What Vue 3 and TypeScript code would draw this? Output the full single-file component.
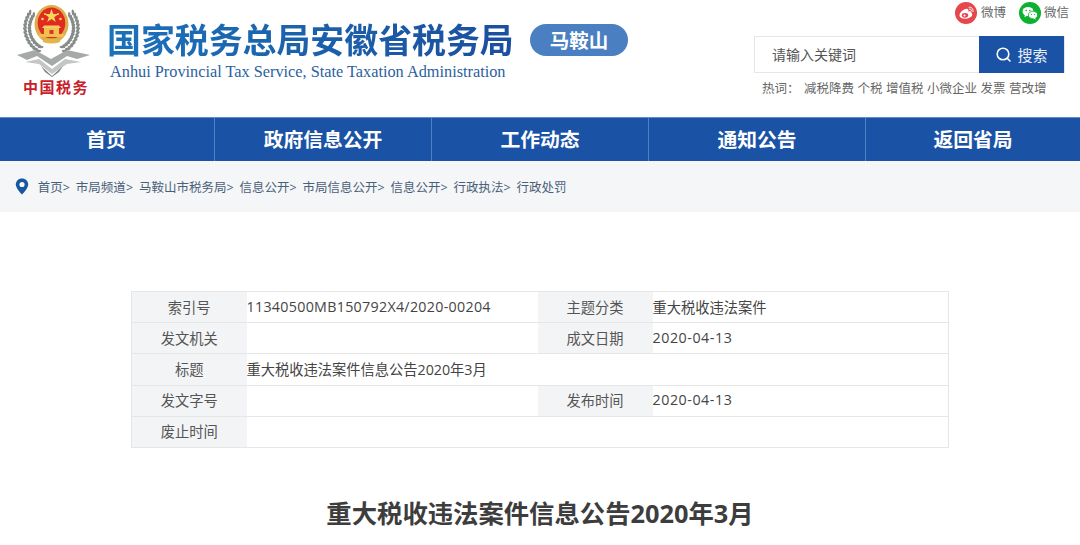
<script setup lang="ts">
const navItems = ['首页', '政府信息公开', '工作动态', '通知公告', '返回省局']
const crumbs = ['首页', '市局频道', '马鞍山市税务局', '信息公开', '市局信息公开', '信息公开', '行政执法', '行政处罚']
const hotWords = ['减税降费', '个税', '增值税', '小微企业', '发票', '营改增']

// wreath leaves around the emblem, angle in degrees on the ring
const leaves: { x: number; y: number; r: number }[] = []
for (let a = 120; a <= 222; a += 8) {
  const rad = (a * Math.PI) / 180
  for (const radius of [22, 26.5]) {
    const dx = Math.cos(rad) * radius
    const dy = Math.sin(rad) * radius
    leaves.push({ x: 36.5 + dx, y: 28 + dy, r: a + 60 })
    leaves.push({ x: 36.5 - dx, y: 28 + dy, r: -a - 60 })
  }
}
</script>

<template>
  <div class="page">
    <header class="header">
      <div class="logo">
        <svg width="80" height="100" viewBox="0 0 80 100">
          <!-- wreath -->
          <g fill="#858c87">
            <ellipse
              v-for="(leaf, i) in leaves"
              :key="i"
              :cx="leaf.x"
              :cy="leaf.y"
              rx="3"
              ry="1.300"
              :transform="`rotate(${leaf.r} ${leaf.x} ${leaf.y})`"
            />
          </g>
          <!-- ribbons -->
          <path d="M2 55 L20 50 L36 59 L52 50 L75 55 L62 59 L52 56 L37 66 L22 56 L12 60 Z" fill="#a5aaa8" />
          <path d="M10 62 L24 59 L37 69 L50 59 L66 62 L52 64 L37 74 L24 64 Z" fill="#c3c6c4" />
          <path d="M26 66 L37 76 L48 66 L44 72 L37 77 L30 72 Z" fill="#7e8482" />
          <!-- emblem -->
          <ellipse cx="36.500" cy="24" rx="17" ry="19" fill="#dcae4e" />
          <ellipse cx="36.500" cy="23" rx="13.800" ry="15.500" fill="#e02b20" />
          <polygon points="36.500,9 38.200,14 43.500,14 39.200,17.200 40.800,22 36.500,19 32.200,22 33.800,17.200 29.500,14 34.800,14" fill="#f6d75a" />
          <circle cx="27.500" cy="19" r="1.300" fill="#f6d75a" />
          <circle cx="45.500" cy="19" r="1.300" fill="#f6d75a" />
          <circle cx="30" cy="14" r="1" fill="#f6d75a" />
          <circle cx="43" cy="14" r="1" fill="#f6d75a" />
          <path d="M27 28 H46 L44 25.500 H29 Z" fill="#f2cd63" />
          <rect x="29" y="28" width="15" height="6" fill="#f2c14e" />
          <rect x="34.500" y="30" width="4" height="4" fill="#d3392a" />
          <rect x="24" y="34" width="25" height="3" rx="1" fill="#eec04c" />
          <ellipse cx="36.500" cy="41" rx="9" ry="2.500" fill="#e4b64a" />
          <text x="8" y="93" class="logo-text">中国税务</text>
        </svg>
      </div>

      <div class="brand">
        <div class="brand-cn">国家税务总局安徽省税务局</div>
        <div class="brand-en">Anhui Provincial Tax Service, State Taxation Administration</div>
      </div>
      <div class="city">马鞍山</div>

      <div class="tools">
        <div class="social">
          <span class="social-item weibo">
            <svg width="22" height="22" viewBox="0 0 22 22">
              <circle cx="11" cy="11" r="11" fill="#e5474c" />
              <path d="M4.500 13.500 C4.500 10.500 8.500 7 11.500 6.800 C13.500 6.700 13.800 8.300 13.300 9.500 C15.300 8.800 16.800 9.500 16.500 11.300 C18 11.800 17.800 16 11 16.800 C7 17.100 4.500 15.500 4.500 13.500 Z" fill="#fff" />
              <ellipse cx="10" cy="13.300" rx="3.200" ry="2.400" fill="#e5474c" />
              <circle cx="9.500" cy="13.500" r="1" fill="#fff" />
              <path d="M14 5.200 C16.500 4.800 18.500 6.800 18 9.500 M14.500 7 C15.700 6.800 16.600 7.800 16.300 9" fill="none" stroke="#fff" stroke-width="1" stroke-linecap="round" />
            </svg>
            <span class="social-text">微博</span>
          </span>
          <span class="social-item">
            <svg width="22" height="22" viewBox="0 0 22 22">
              <circle cx="11" cy="11" r="11" fill="#0bb12f" />
              <ellipse cx="9" cy="9.500" rx="5.500" ry="4.500" fill="#fff" />
              <path d="M6 12.500 L5.500 15.200 L8.500 13.500 Z" fill="#fff" />
              <ellipse cx="14" cy="13" rx="4.600" ry="3.800" fill="#fff" stroke="#0bb12f" stroke-width="0.800" />
              <path d="M16 15.800 L17 17.600 L14 16.400 Z" fill="#fff" />
              <circle cx="7.200" cy="8.500" r="0.800" fill="#0bb12f" />
              <circle cx="10.800" cy="8.500" r="0.800" fill="#0bb12f" />
              <circle cx="12.500" cy="12.500" r="0.600" fill="#0bb12f" />
              <circle cx="15.500" cy="12.500" r="0.600" fill="#0bb12f" />
            </svg>
            <span class="social-text">微信</span>
          </span>
        </div>
        <div class="search">
          <div class="search-input">请输入关键词</div>
          <button type="button" class="search-btn">
            <svg width="17" height="17" viewBox="0 0 17 17" fill="none" stroke="#fff" stroke-width="1.600">
              <circle cx="8" cy="8" r="5.800" />
              <path d="M12.200 12.200 L15 15" stroke-linecap="round" />
            </svg>
            <span>搜索</span>
          </button>
        </div>
        <div class="hot">
          <span class="hot-label">热词：</span>
          <span v-for="word in hotWords" :key="word">{{ word }}</span>
        </div>
      </div>
    </header>

    <nav class="nav">
      <a v-for="item in navItems" :key="item" class="nav-item">{{ item }}</a>
    </nav>

    <div class="crumbs">
      <svg class="pin" width="14" height="17" viewBox="0 0 14 17">
        <path d="M7 0.500 C3.300 0.500 0.800 3.200 0.800 6.500 C0.800 10.500 7 16.500 7 16.500 C7 16.500 13.200 10.500 13.200 6.500 C13.200 3.200 10.700 0.500 7 0.500 Z" fill="#17579f" />
        <circle cx="7" cy="6.500" r="2.600" fill="#f5f6f8" />
      </svg>
      <span v-for="(crumb, i) in crumbs" :key="i" class="crumb">{{ crumb }}<template v-if="i < crumbs.length - 1">&gt;</template></span>
    </div>

    <table class="info">
      <colgroup>
        <col class="col-label" />
        <col class="col-value" />
        <col class="col-label2" />
        <col />
      </colgroup>
      <tbody>
        <tr>
          <th>索引号</th>
          <td class="code">11340500MB150792X4/2020-00204</td>
          <th>主题分类</th>
          <td>重大税收违法案件</td>
        </tr>
        <tr>
          <th>发文机关</th>
          <td></td>
          <th>成文日期</th>
          <td class="date">2020-04-13</td>
        </tr>
        <tr>
          <th>标题</th>
          <td colspan="3">重大税收违法案件信息公告2020年3月</td>
        </tr>
        <tr>
          <th>发文字号</th>
          <td></td>
          <th>发布时间</th>
          <td class="date">2020-04-13</td>
        </tr>
        <tr>
          <th>废止时间</th>
          <td colspan="3"></td>
        </tr>
      </tbody>
    </table>

    <h1 class="title">重大税收违法案件信息公告2020年3月</h1>
  </div>
</template>

<style>
html,
body {
  margin: 0;
  overflow: hidden;
  background: #fff;
}
</style>

<style scoped>
.page {
  width: 1080px;
  height: 545px;
  overflow: hidden;
  font-family: "Open Sans", "Noto Sans CJK SC", sans-serif;
  color: #444;
}

.header {
  height: 117px;
  display: flex;
  padding-left: 15px;
  box-sizing: border-box;
}

.logo {
  width: 80px;
  height: 100px;
}

.logo svg {
  display: block;
}

.logo-text {
  font-family: "Noto Sans CJK SC", sans-serif;
  font-size: 15px;
  font-weight: 700;
  fill: #c8202a;
  letter-spacing: 1.500px;
}

.brand {
  margin-left: 13px;
  padding-top: 17px;
  width: 407px;
}

.brand-cn {
  font-family: "Noto Sans CJK SC", sans-serif;
  font-size: 33.900px;
  font-weight: 700;
  line-height: 44px;
  margin-left: -1px;
  white-space: nowrap;
  color: #1b5cab;
  background: linear-gradient(90deg, #1b72ba, #1b4f9e);
  -webkit-background-clip: text;
  background-clip: text;
  -webkit-text-fill-color: transparent;
}

.brand-en {
  font-family: "Liberation Serif", serif;
  font-size: 16.300px;
  line-height: 20px;
  margin-left: 2px;
  margin-top: 1px;
  white-space: nowrap;
  color: #2b5f9f;
}

.city {
  margin: 24px 0 0 15px;
  width: 98px;
  height: 32px;
  border-radius: 16px;
  background: #4a7fc1;
  color: #fff;
  font-family: "Noto Sans CJK SC", sans-serif;
  font-size: 19.500px;
  font-weight: 700;
  line-height: 32px;
  text-align: center;
}

.tools {
  margin-left: auto;
  width: 326px;
  display: flex;
  flex-direction: column;
}

.social {
  height: 36px;
  display: flex;
  justify-content: flex-end;
  gap: 13px;
  padding: 2px 11px 0 0;
  box-sizing: border-box;
}

.social-item {
  display: flex;
  align-items: flex-start;
  gap: 3px;
}

.weibo {
  gap: 4px;
}

.social-text {
  font-size: 12.500px;
  line-height: 22px;
  color: #666;
}

.search {
  width: 311px;
  height: 37px;
  display: flex;
  border: 1px solid #e6e6e6;
  box-sizing: border-box;
}

.search-input {
  flex: 1;
  padding-left: 17px;
  font-size: 14px;
  line-height: 35px;
  color: #555;
}

.search-btn {
  width: 85px;
  margin: -1px 0;
  border: none;
  padding: 0;
  background: #1a52a5;
  color: #e8eef8;
  font-family: inherit;
  font-size: 15px;
  display: flex;
  align-items: center;
  justify-content: center;
  gap: 5px;
}

.hot {
  margin: 6px 0 0 8px;
  display: flex;
  gap: 3.500px;
  font-size: 12.500px;
  line-height: 20px;
  color: #666;
  white-space: nowrap;
}

.hot-label {
  margin-right: 1px;
}

.nav {
  height: 44px;
  display: grid;
  grid-template-columns: 215px repeat(3, 217px) 1fr;
  background: #1a52a5;
  border-top: 1px solid #5b8ccc;
  box-sizing: border-box;
}

.nav-item {
  color: #fff;
  font-family: "Noto Sans CJK SC", sans-serif;
  font-size: 19.800px;
  font-weight: 700;
  line-height: 42px;
  text-align: center;
  border-right: 1px solid #4f81c4;
}

.nav-item:first-child {
  padding-right: 2px;
}

.nav-item:last-child {
  border-right: none;
}

.crumbs {
  height: 51px;
  display: flex;
  align-items: center;
  gap: 5.850px;
  padding-left: 15px;
  background: #f5f6f8;
  font-size: 12.500px;
  color: #4a5f78;
  white-space: nowrap;
}

.pin {
  margin-right: 3px;
}

.info {
  width: 818px;
  margin: 79px 0 0 131px;
  border-collapse: collapse;
  table-layout: fixed;
  border: 1px solid #e6e6e6;
  font-size: 14.250px;
}

.col-label {
  width: 115px;
}

.col-value {
  width: 291px;
}

.col-label2 {
  width: 115px;
}

.info th,
.info td {
  height: 31.200px;
  padding: 0 0 2px;
  border-top: 1px solid #e6e6e6;
  box-sizing: border-box;
}

.info th {
  background: #f3f4f5;
  color: #555;
  font-weight: 400;
  text-align: center;
}

.info td {
  padding-left: 0;
  text-align: left;
  color: #444;
}

.info .code {
  letter-spacing: 0.300px;
}

.info .date {
  letter-spacing: 0.550px;
}

.title {
  margin: 45px 0 0;
  font-family: "Open Sans", "Noto Sans CJK SC", sans-serif;
  font-size: 25.350px;
  font-weight: 700;
  line-height: 40px;
  text-align: center;
  color: #3d3d3d;
}
</style>
